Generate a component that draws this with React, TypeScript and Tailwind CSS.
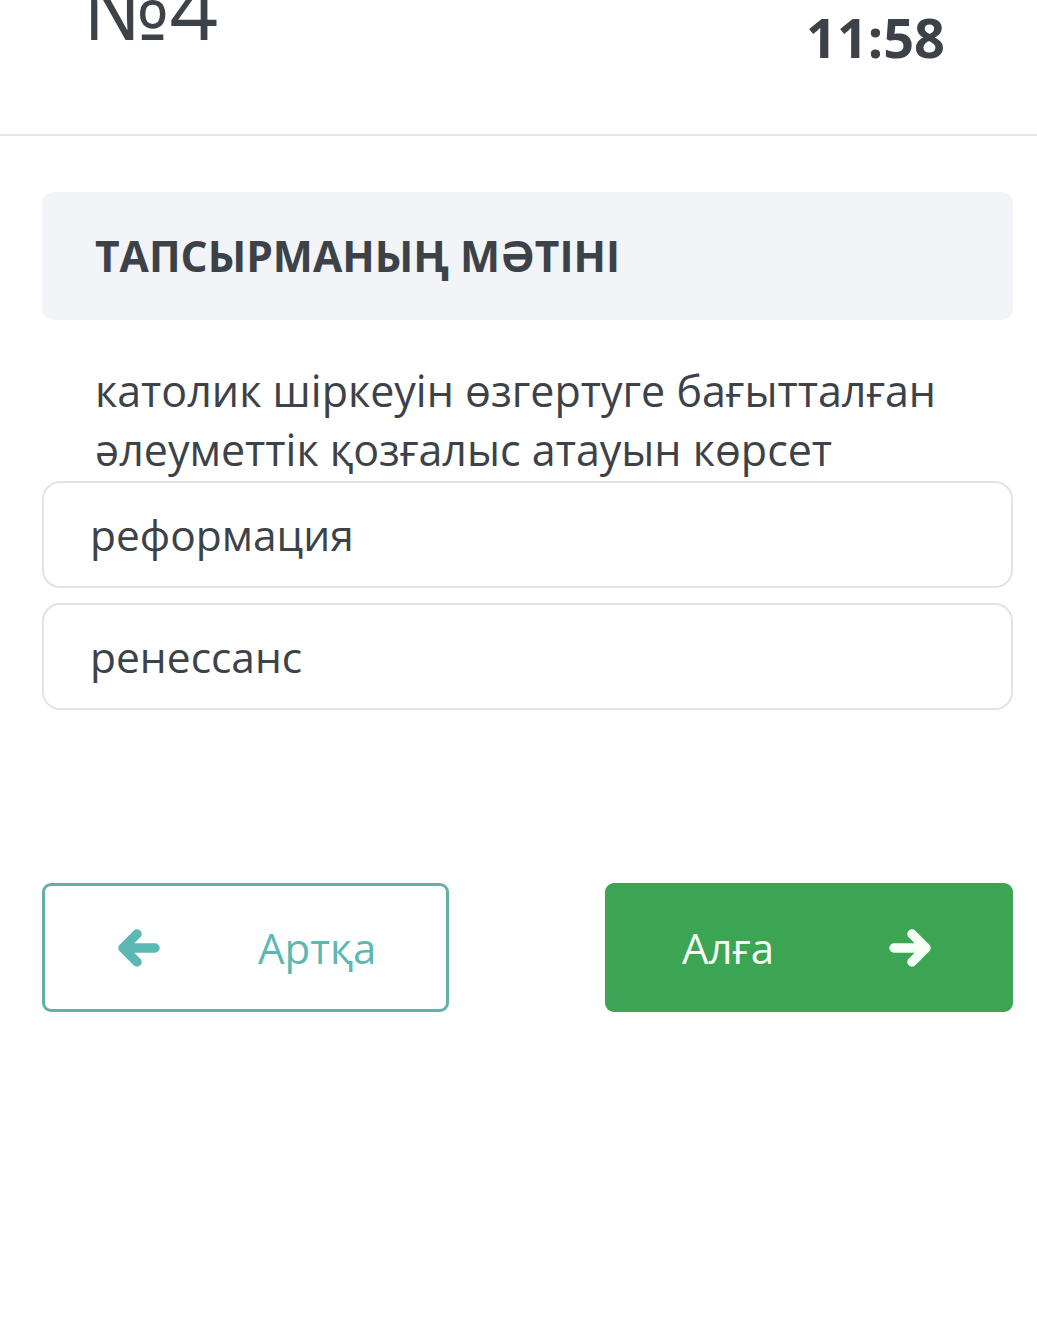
import React from "react";

function Arrow({ dir, className }: { dir: "left" | "right"; className?: string }) {
  return (
    <svg viewBox="0 0 44 38" className={className} fill="none" stroke="currentColor" strokeWidth={9.5} strokeLinecap="round" strokeLinejoin="round">
      {dir === "left" ? (
        <path d="M20 5 L6 19 L20 33 M6 19 L38 19" />
      ) : (
        <path d="M24 5 L38 19 L24 33 M38 19 L6 19" />
      )}
    </svg>
  );
}

export default function App() {
  const font = { fontFamily: '"Open Sans", "Noto Sans", sans-serif' };
  return (
    <div className="w-[1037px] h-[1344px] bg-white text-[#3d4249] overflow-hidden" style={font}>
      <div className="h-[136px] flex justify-between items-start pl-[83px] pr-[88px] border-b-2 border-[#e6e6e6]">
        <div className="text-[85px] leading-none mt-[-35px] font-normal">№4</div>
        <div className="text-[54px] leading-none font-bold mt-[10px] mr-[4px]">11:58</div>
      </div>
      <div className="pl-[42px] pr-[24px] pt-[56px]">
        <div className="h-[128px] rounded-[12px] bg-[#f2f4f7] flex items-center px-[53px]">
          <span className="text-[42.5px] font-bold">ТАПСЫРМАНЫҢ МӘТІНІ</span>
        </div>
        <div className="px-[53px] pt-[41px] pb-[2px] text-[43px] leading-[59px]">
          католик шіркеуін өзгертуге бағытталған әлеуметтік қозғалыс атауын көрсет
        </div>
        <div className="flex flex-col gap-[15px]">
          <div className="h-[107px] rounded-[18px] border-2 border-[#e3e3e3] flex items-center px-[46px] text-[42.5px]">
            реформация
          </div>
          <div className="h-[107px] rounded-[18px] border-2 border-[#e3e3e3] flex items-center px-[46px] text-[42.5px]">
            ренессанс
          </div>
        </div>
        <div className="flex justify-between mt-[173px]">
          <div className="w-[407px] h-[129px] rounded-[9px] border-[3px] border-[#62b0a9] flex items-center text-[#5cb8b2]">
            <Arrow dir="left" className="ml-[72px] w-[44px] h-[38px]" />
            <span className="ml-[97px] text-[42px]">Артқа</span>
          </div>
          <div className="w-[408px] h-[129px] rounded-[9px] bg-[#3ba553] flex items-center text-[#f4fff6]">
            <span className="ml-[77px] text-[42px]">Алға</span>
            <Arrow dir="right" className="ml-[114px] w-[44px] h-[38px]" />
          </div>
        </div>
      </div>
    </div>
  );
}
